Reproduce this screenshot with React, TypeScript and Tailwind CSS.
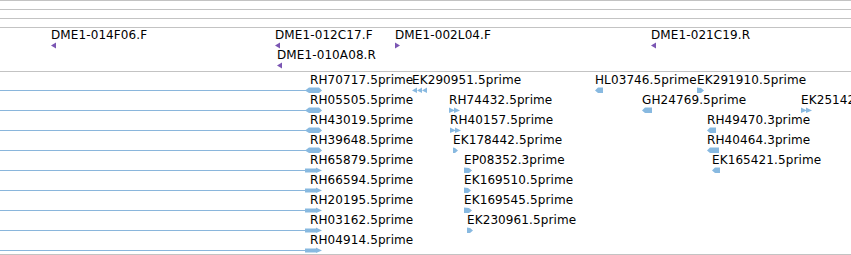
type Label = { text: string; x: number; row: number };
type Glyph = { kind: 'left' | 'right' | 'lblock' | 'rblock' | 'triple' | 'double' | 'blob' | 'arrow'; x: number; row: number; w?: number };

const cloneLabels: Label[] = [
  { text: 'DME1-014F06.F', x: 51, row: 0 },
  { text: 'DME1-012C17.F', x: 275, row: 0 },
  { text: 'DME1-002L04.F', x: 395, row: 0 },
  { text: 'DME1-021C19.R', x: 651, row: 0 },
  { text: 'DME1-010A08.R', x: 277, row: 1 },
];

const cloneGlyphs: Glyph[] = [
  { kind: 'left', x: 51, row: 0 },
  { kind: 'left', x: 275, row: 0 },
  { kind: 'right', x: 395, row: 0 },
  { kind: 'left', x: 651, row: 0 },
  { kind: 'left', x: 277, row: 1 },
];

const estLabels: Label[] = [
  { text: 'RH70717.5prime', x: 310, row: 0 },
  { text: 'EK290951.5prime', x: 412, row: 0 },
  { text: 'HL03746.5prime', x: 595, row: 0 },
  { text: 'EK291910.5prime', x: 697, row: 0 },
  { text: 'RH05505.5prime', x: 310, row: 1 },
  { text: 'RH74432.5prime', x: 449, row: 1 },
  { text: 'GH24769.5prime', x: 642, row: 1 },
  { text: 'EK251420.5prime', x: 801, row: 1 },
  { text: 'RH43019.5prime', x: 310, row: 2 },
  { text: 'RH40157.5prime', x: 450, row: 2 },
  { text: 'RH49470.3prime', x: 707, row: 2 },
  { text: 'RH39648.5prime', x: 310, row: 3 },
  { text: 'EK178442.5prime', x: 453, row: 3 },
  { text: 'RH40464.3prime', x: 707, row: 3 },
  { text: 'RH65879.5prime', x: 310, row: 4 },
  { text: 'EP08352.3prime', x: 464, row: 4 },
  { text: 'EK165421.5prime', x: 712, row: 4 },
  { text: 'RH66594.5prime', x: 310, row: 5 },
  { text: 'EK169510.5prime', x: 464, row: 5 },
  { text: 'RH20195.5prime', x: 310, row: 6 },
  { text: 'EK169545.5prime', x: 464, row: 6 },
  { text: 'RH03162.5prime', x: 310, row: 7 },
  { text: 'EK230961.5prime', x: 467, row: 7 },
  { text: 'RH04914.5prime', x: 310, row: 8 },
];

const estGlyphs: Glyph[] = [
  { kind: 'blob', x: 305, row: 0 },
  { kind: 'blob', x: 305, row: 1 },
  { kind: 'blob', x: 305, row: 2 },
  { kind: 'blob', x: 305, row: 3 },
  { kind: 'arrow', x: 305, row: 4 },
  { kind: 'arrow', x: 305, row: 5 },
  { kind: 'arrow', x: 305, row: 6 },
  { kind: 'arrow', x: 305, row: 7 },
  { kind: 'arrow', x: 305, row: 8 },
  { kind: 'triple', x: 412, row: 0 },
  { kind: 'lblock', x: 595, row: 0, w: 8 },
  { kind: 'rblock', x: 697, row: 0, w: 7 },
  { kind: 'double', x: 449, row: 1 },
  { kind: 'lblock', x: 642, row: 1, w: 10 },
  { kind: 'double', x: 801, row: 1 },
  { kind: 'double', x: 450, row: 2 },
  { kind: 'lblock', x: 707, row: 2, w: 9 },
  { kind: 'rblock', x: 453, row: 3, w: 5 },
  { kind: 'lblock', x: 707, row: 3, w: 12 },
  { kind: 'rblock', x: 464, row: 4, w: 8 },
  { kind: 'lblock', x: 712, row: 4, w: 8 },
  { kind: 'rblock', x: 464, row: 5, w: 7 },
  { kind: 'rblock', x: 464, row: 6, w: 8 },
  { kind: 'rblock', x: 467, row: 7, w: 6 },
];

function shape(g: Glyph, c: number): string {
  const x = g.x;
  const w = g.w ?? 8;
  switch (g.kind) {
    case 'left':
      return `${x},${c} ${x + 5},${c - 3} ${x + 5},${c + 3}`;
    case 'right':
      return `${x},${c - 3} ${x + 5},${c} ${x},${c + 3}`;
    case 'lblock':
      return `${x},${c} ${x + 3},${c - 3} ${x + w},${c - 3} ${x + w},${c + 2.5} ${x + 3},${c + 2.5}`;
    case 'rblock':
      return `${x},${c - 3} ${x + w - 3},${c - 2.5} ${x + w},${c} ${x + w - 3},${c + 2.5} ${x},${c + 2.5}`;
    case 'blob':
      return `${x},${c} ${x + 4},${c - 3} ${x + 14},${c - 3} ${x + 17},${c} ${x + 14},${c + 2.5} ${x + 4},${c + 2.5}`;
    case 'arrow':
      return `${x},${c - 2} ${x + 11},${c - 2} ${x + 11},${c - 3} ${x + 17},${c} ${x + 11},${c + 2.5} ${x + 11},${c + 2} ${x},${c + 2}`;
    default:
      return '';
  }
}

function Glyphs({ items, color, top }: { items: Glyph[]; color: string; top: number }) {
  return (
    <>
      {items.map((g, i) => {
        const c = top + g.row * 20;
        if (g.kind === 'triple') {
          return (
            <g key={i} fill={color}>
              {[0, 5, 10].map((d) => (
                <polygon key={d} points={`${g.x + d},${c} ${g.x + d + 5},${c - 3} ${g.x + d + 5},${c + 2.5}`} />
              ))}
            </g>
          );
        }
        if (g.kind === 'double') {
          return (
            <g key={i} fill={color}>
              {[0, 5].map((d) => (
                <polygon key={d} points={`${g.x + d},${c - 3} ${g.x + d + 6},${c} ${g.x + d},${c + 2.5}`} />
              ))}
            </g>
          );
        }
        return <polygon key={i} points={shape(g, c)} fill={color} />;
      })}
    </>
  );
}

function Labels({ items, top }: { items: Label[]; top: number }) {
  return (
    <>
      {items.map((l) => (
        <span
          key={l.text}
          className="absolute whitespace-nowrap text-[12px] leading-[14px] tracking-[0.1px] text-black"
          style={{ left: l.x, top: top + l.row * 20 }}
        >
          {l.text}
        </span>
      ))}
    </>
  );
}

export default function App() {
  return (
    <div className="w-[851px] h-[255px] bg-white overflow-hidden font-['DejaVu_Sans',sans-serif]">
      {/* ruler rows */}
      <div className="h-[9px] border-t border-[#c3c3c3]" />
      <div className="h-[9px] border-t border-[#c3c3c3]" />
      <div className="h-[9px] border-t border-[#c3c3c3]" />

      {/* BAC end track */}
      <div className="relative h-[44px] border-t border-[#c3c3c3]">
        <svg className="absolute inset-0" width={851} height={43}>
          <Glyphs items={cloneGlyphs} color="#7b56b3" top={17.5} />
        </svg>
        <Labels items={cloneLabels} top={0} />
      </div>

      {/* EST track */}
      <div className="relative h-[184px] border-y border-[#c3c3c3]">
        <svg className="absolute inset-0" width={851} height={182}>
          {[0, 1, 2, 3, 4, 5, 6, 7, 8].map((k) => (
            <line key={k} x1={0} x2={306} y1={18.5 + k * 20} y2={18.5 + k * 20} stroke="#8ab6dc" strokeWidth={1} />
          ))}
          <Glyphs items={estGlyphs} color="#88b9e0" top={18.5} />
        </svg>
        <Labels items={estLabels} top={1} />
      </div>
    </div>
  );
}
